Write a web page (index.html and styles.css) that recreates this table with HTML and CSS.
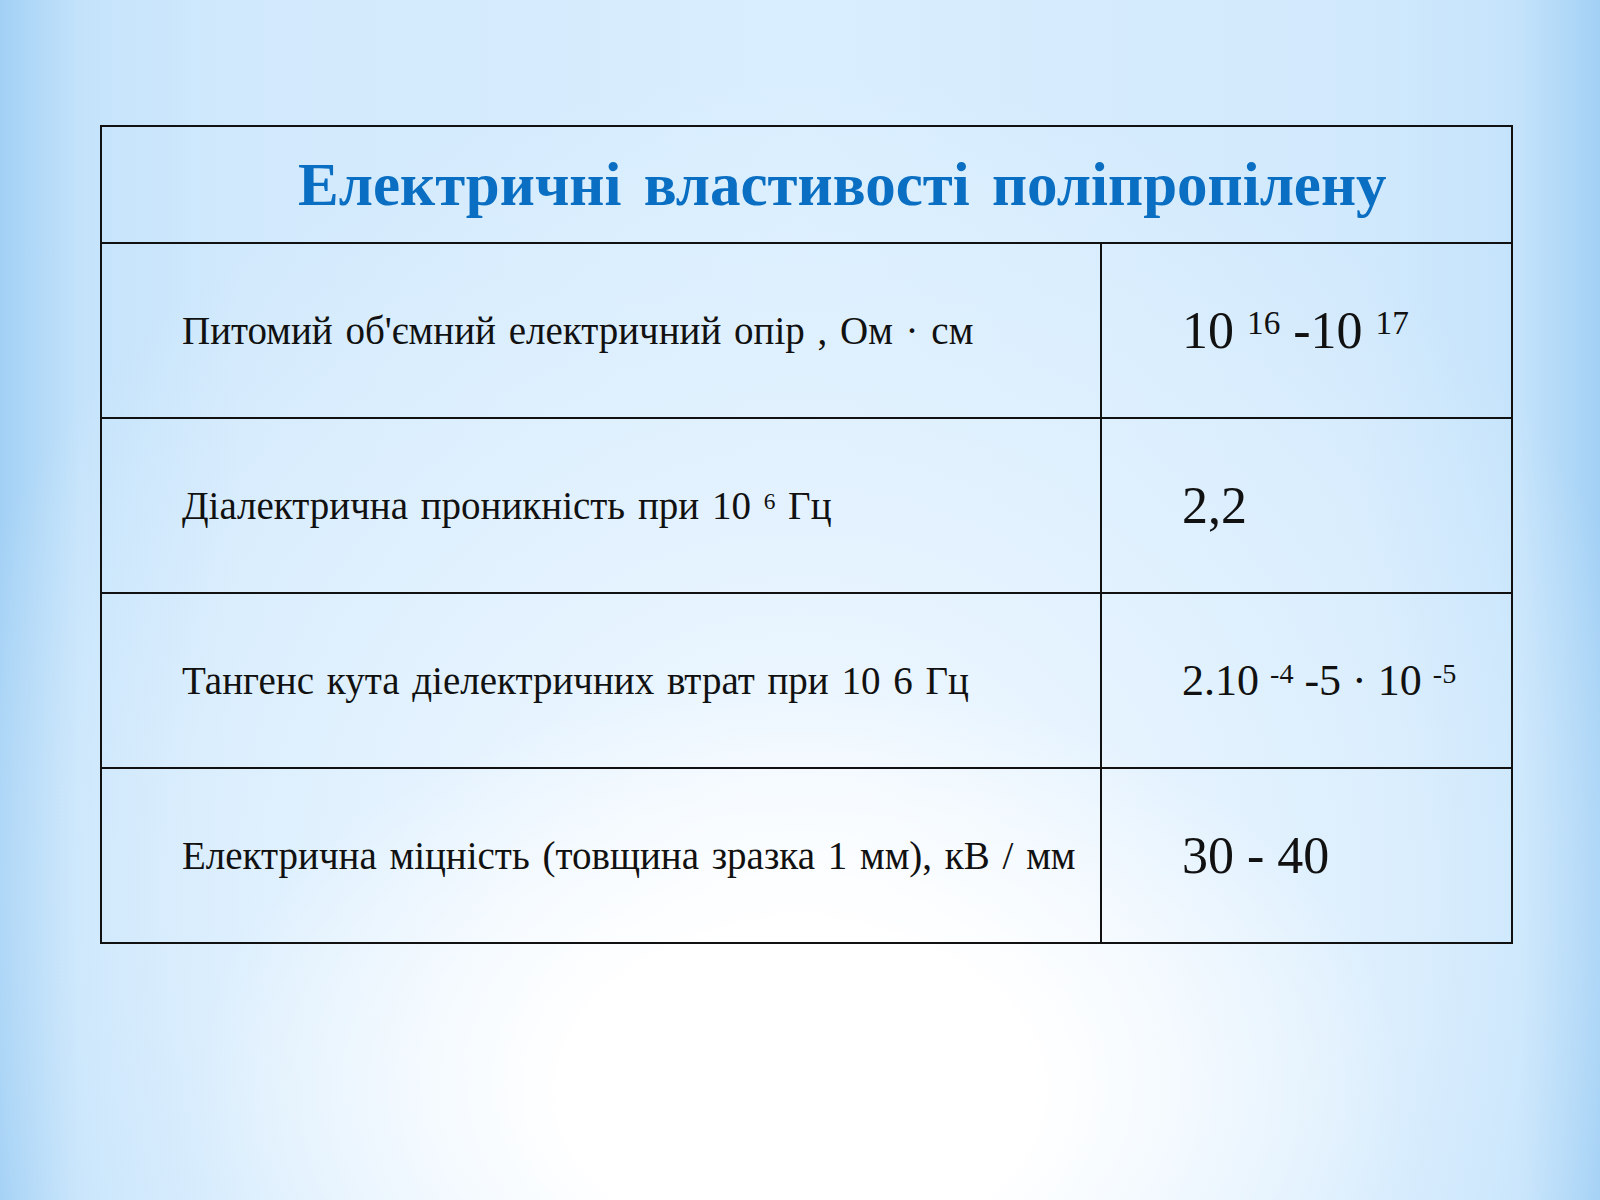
FILE: index.html
```html
<!DOCTYPE html>
<html lang="uk">
<head>
<meta charset="utf-8">
<title>Електричні властивості поліпропілену</title>
<link rel="stylesheet" href="styles.css">
</head>
<body>
<div class="slide">
  <table class="props">
    <tr class="head-row">
      <th colspan="2" class="title">Електричні властивості поліпропілену</th>
    </tr>
    <tr class="row">
      <td class="name">Питомий об'ємний електричний опір , Ом · см</td>
      <td class="val big">10 <sup>16</sup> -10 <sup>17</sup></td>
    </tr>
    <tr class="row">
      <td class="name">Діалектрична проникність при 10 <sup>6</sup> Гц</td>
      <td class="val big">2,2</td>
    </tr>
    <tr class="row">
      <td class="name">Тангенс кута діелектричних втрат при 10 6 Гц</td>
      <td class="val mid">2.10 <sup>-4</sup> -5 · 10 <sup>-5</sup></td>
    </tr>
    <tr class="row">
      <td class="name">Електрична міцність (товщина зразка 1 мм), кВ / мм</td>
      <td class="val big">30 - 40</td>
    </tr>
  </table>
</div>
</body>
</html>
```
FILE: styles.css
```css
html, body {
  margin: 0;
  padding: 0;
}
body {
  width: 1600px;
  height: 1200px;
  overflow: hidden;
  font-family: "Liberation Serif", "Times New Roman", serif;
  background:
    radial-gradient(ellipse 38% 34% at 50% 91%, #ffffff 0%, #ffffff 38%, rgba(255,255,255,0) 100%),
    radial-gradient(ellipse 56% 68% at 50% 74%, #f4faff 0%, #e3f2fe 45%, rgba(214,236,252,0) 100%),
    linear-gradient(to right, #a2d0f5 0%, #c4e3fb 5%, #d1e9fc 15%, #d9eefe 50%, #d1e9fc 85%, #c4e3fb 95%, #a2d0f5 100%);
}
.slide {
  box-sizing: border-box;
  width: 1600px;
  height: 1200px;
  padding: 125px 0 0 100px;
}
.props {
  width: 1413px;
  border-collapse: collapse;
  border: 2px solid #111;
}
.props td, .props th {
  border: 2px solid #111;
  padding: 0;
}
.head-row {
  height: 117px;
}
.title {
  text-align: left;
  padding-left: 196px !important;
  font-weight: bold;
  font-size: 61px;
  color: #0a6fc2;
  word-spacing: 7px;
}
.row {
  height: 175px;
}
.name {
  width: 1000px;
  box-sizing: border-box;
  padding-left: 80px !important;
  font-size: 39px;
  word-spacing: 3px;
  color: #111;
  vertical-align: middle;
}
.val {
  padding-left: 80px !important;
  color: #111;
  vertical-align: middle;
}
.val.big {
  font-size: 52px;
}
.val.mid {
  font-size: 44px;
}
sup {
  font-size: 64%;
  vertical-align: 0;
  position: relative;
  top: -0.42em;
}
.name sup {
  font-size: 60%;
}
```
